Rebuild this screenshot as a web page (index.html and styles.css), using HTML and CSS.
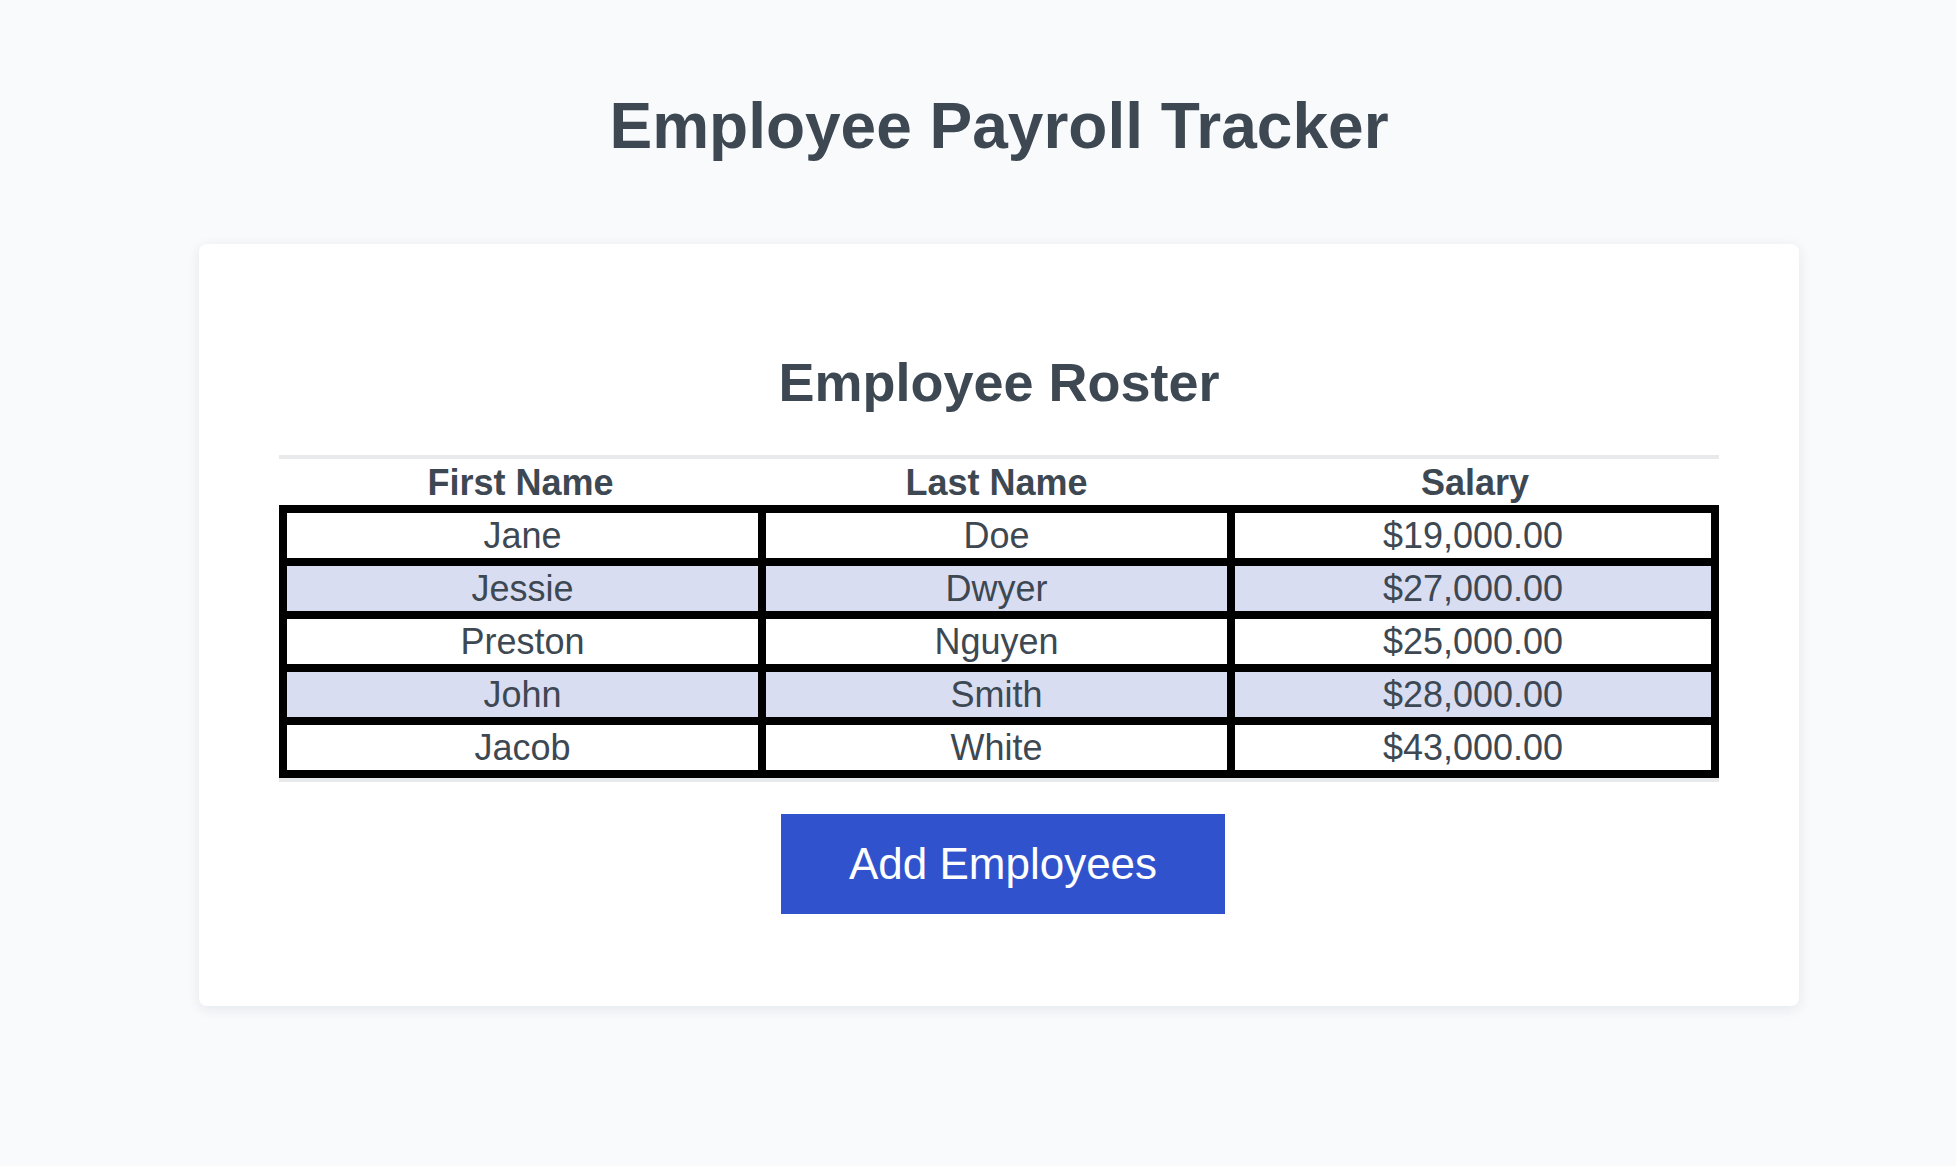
FILE: index.html
```html
<!DOCTYPE html>
<html lang="en">
<head>
<meta charset="utf-8">
<title>Employee Payroll Tracker</title>
<link rel="stylesheet" href="styles.css">
</head>
<body>
<div class="page">
  <h1 class="page-title">Employee Payroll Tracker</h1>
  <main class="card">
    <h2 class="card-title">Employee Roster</h2>
    <table class="roster">
      <colgroup>
        <col class="col-first">
        <col class="col-last">
        <col class="col-salary">
      </colgroup>
      <thead>
        <tr>
          <th>First Name</th>
          <th>Last Name</th>
          <th>Salary</th>
        </tr>
      </thead>
      <tbody>
        <tr><td>Jane</td><td>Doe</td><td>$19,000.00</td></tr>
        <tr><td>Jessie</td><td>Dwyer</td><td>$27,000.00</td></tr>
        <tr><td>Preston</td><td>Nguyen</td><td>$25,000.00</td></tr>
        <tr><td>John</td><td>Smith</td><td>$28,000.00</td></tr>
        <tr><td>Jacob</td><td>White</td><td>$43,000.00</td></tr>
      </tbody>
    </table>
    <div class="actions">
      <button class="btn-add" type="button">Add Employees</button>
    </div>
  </main>
</div>
</body>
</html>
```

FILE: styles.css
```css
html, body {
  margin: 0;
  padding: 0;
}

body {
  background: #f8fafc;
  color: #3d4852;
  font-family: "Liberation Sans", Arial, Helvetica, sans-serif;
  min-height: 1166px;
}

.page {
  width: 1600px;
  margin-left: 199px;
  display: flex;
  flex-direction: column;
}

.page-title {
  margin: 90px 0 0;
  font-size: 64px;
  font-weight: 700;
  line-height: 73px;
  text-align: center;
  color: #3d4852;
}

.card {
  margin-top: 81px;
  background: #ffffff;
  border-radius: 8px;
  box-shadow: 0 3px 14px rgba(30, 40, 60, 0.09);
  padding: 107px 80px 92px;
  display: flex;
  flex-direction: column;
}

.card-title {
  margin: 0 0 42px;
  font-size: 54px;
  font-weight: 700;
  line-height: 62px;
  text-align: center;
  color: #3d4852;
}

.roster {
  width: 1440px;
  table-layout: fixed;
  border-collapse: separate;
  border-spacing: 0;
  border-top: 4px solid #e8e9eb;
  border-bottom: 4px solid #e8e9eb;
  font-size: 36px;
  color: #3d4852;
}

.col-first { width: 483px; }
.col-last { width: 469px; }
.col-salary { width: 488px; }

.roster th {
  font-weight: 700;
  text-align: center;
  line-height: 41px;
  padding: 3px 0 2px;
}

.roster td {
  text-align: center;
  line-height: 41px;
  padding: 2px 0;
  border: 4px solid #000000;
  background: #ffffff;
}

.roster tbody tr:nth-child(even) td {
  background: #d8ddf2;
}

.roster tbody tr:first-child td {
  border-top-width: 8px;
}

.roster tbody tr:last-child td {
  border-bottom-width: 8px;
}

.roster td:first-child {
  border-left-width: 8px;
}

.roster td:last-child {
  border-right-width: 8px;
}

.actions {
  display: flex;
  justify-content: center;
  margin-top: 32px;
  padding-left: 8px;
}

.btn-add {
  width: 444px;
  height: 100px;
  border: none;
  border-radius: 0;
  background: #3053cd;
  color: #ffffff;
  font-family: "Liberation Sans", Arial, Helvetica, sans-serif;
  font-size: 44px;
  line-height: 50px;
  padding: 0;
  cursor: pointer;
}
```
